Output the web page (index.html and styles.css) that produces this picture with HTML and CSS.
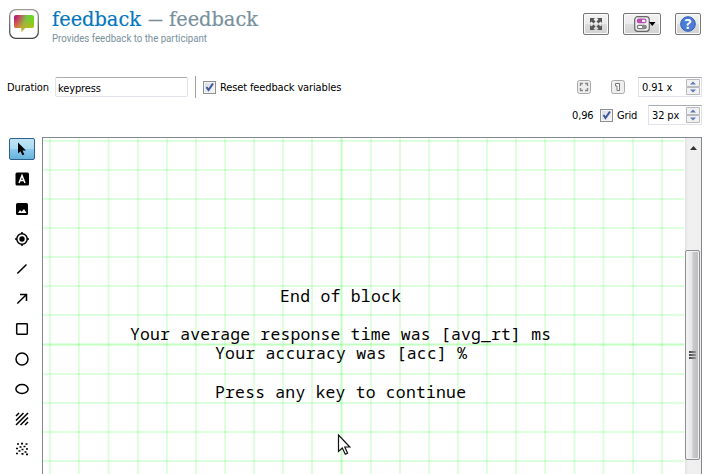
FILE: index.html
```html
<!DOCTYPE html>
<html lang="en">
<head>
<meta charset="utf-8">
<title>feedback</title>
<link rel="stylesheet" href="styles.css">
</head>
<body>
<header class="header">
  <svg class="logo" width="30" height="30" viewBox="0 0 30 30">
    <defs>
      <linearGradient id="hue" x1="0" y1="0" x2="1" y2=".25"><stop offset="0" stop-color="#a3148c"/><stop offset=".28" stop-color="#c64b5d"/><stop offset=".6" stop-color="#7cc04b"/><stop offset="1" stop-color="#66de16"/></linearGradient>
      <linearGradient id="warm" x1="0" y1="0" x2="0" y2="1"><stop offset=".2" stop-color="#f0a020" stop-opacity="0"/><stop offset="1" stop-color="#f0a51c" stop-opacity=".75"/></linearGradient>
      <linearGradient id="rim" x1="0" y1="0" x2="0" y2="1"><stop offset="0" stop-color="#999"/><stop offset="1" stop-color="#444"/></linearGradient>
    </defs>
    <rect x=".7" y=".7" width="28.6" height="28.6" rx="6" fill="#fff" stroke="url(#rim)" stroke-width="1.3"/>
    <path d="M7 6H23Q25 6 25 8V17Q25 19 23 19H16L12.500 23V19H7Q5 19 5 17V8Q5 6 7 6Z" fill="url(#hue)"/>
    <path d="M7 6H23Q25 6 25 8V17Q25 19 23 19H16L12.500 23V19H7Q5 19 5 17V8Q5 6 7 6Z" fill="url(#warm)"/>
  </svg>
  <svg class="titles" width="260" height="52" viewBox="50 0 260 52">
    <text class="title name" x="52" y="26" textLength="89" lengthAdjust="spacingAndGlyphs">feedback</text>
    <text class="title" x="148" y="26" textLength="15" lengthAdjust="spacingAndGlyphs">—</text>
    <text class="title" x="169" y="26" textLength="89" lengthAdjust="spacingAndGlyphs">feedback</text>
    <text class="subtitle" x="52" y="42" textLength="155" lengthAdjust="spacingAndGlyphs">Provides feedback to the participant</text>
  </svg>
  <div class="actions">
    <button class="btn"><svg width="24" height="20" viewBox="0 0 24 20"><g fill="#555"><path d="M6 4h5L9.500 5.500 11.500 7.500 9.500 9.500 7.500 7.500 6 9Z"/><path d="M18 4h-5l1.500 1.500-2 2 2 2 2-2L18 9Z"/><path d="M6 16h5l-1.500-1.500 2-2-2-2-2 2L6 11Z"/><path d="M18 16h-5l1.500-1.500-2-2 2-2 2 2L18 11Z"/></g></svg></button>
    <button class="btn wide"><svg width="36" height="20" viewBox="0 0 36 20"><rect x="10.700" y="2.700" width="14.600" height="14.600" rx="3" fill="#eee" stroke="#666" stroke-width="1.200"/><rect x="13.300" y="5.200" width="8.700" height="3.400" rx="1.700" fill="#fff" stroke="#bd4bb5" stroke-width="1.200"/><path d="M14 5h4v4h-4q-1.500-2 0-4" fill="#bd4bb5"/><rect x="13.300" y="11.300" width="8.700" height="3.400" rx="1.700" fill="#fff" stroke="#777" stroke-width="1.200"/><path d="M18 11h4q1.500 2 0 4h-4z" fill="#888"/><path d="M25 8h6.500l-3.250 4z"/></svg></button>
    <button class="btn"><svg width="24" height="20" viewBox="0 0 24 20"><circle cx="12" cy="10" r="7.300" fill="#4a7dd6" stroke="#2c5db5"/><text class="help" x="12" y="15" text-anchor="middle">?</text></svg></button>
  </div>
</header>
<section class="row options">
  <label class="duration">Duration</label>
  <div class="field">keypress</div>
  <i class="sep"></i>
  <span class="check"><svg width="11" height="11" viewBox="0 0 11 11"><path d="M2.500 5 4.500 8 9 1.500"/></svg></span>
  <label class="reset">Reset feedback variables</label>
  <div class="right">
    <svg class="fit" width="14" height="14" viewBox="0 0 14 14"><rect class="mini" x=".5" y=".5" width="13" height="13" rx="2"/><path d="M3.500 6V3.500H6M8 3.500h2.500V6M3.500 8v2.500H6M8 10.500h2.500V8" fill="none" stroke="#888" stroke-width="1.400"/></svg>
    <svg class="one" width="14" height="14" viewBox="0 0 14 14"><rect class="mini" x=".5" y=".5" width="13" height="13" rx="2"/><path d="M4.500 3.500H8.500V10.500H6V6H4.500Z" fill="#fff" stroke="#777"/></svg>
    <div class="spin zoom"><span>0.91 x</span><svg width="14" height="16" viewBox="0 0 14 16"><path class="step" d="M.5.500h13v7H.5zM.5 8.500h13v7H.5z"/><path d="M7 2.500l3 3H4zM4 10.500h6l-3 3z" fill="#5c78bd"/></svg></div>
  </div>
</section>
<section class="row gridrow">
  <span class="coord">0,96</span>
  <span class="check"><svg width="11" height="11" viewBox="0 0 11 11"><path d="M2.500 5 4.500 8 9 1.500"/></svg></span>
  <label class="gridlabel">Grid</label>
  <div class="spin"><span>32 px</span><svg width="14" height="16" viewBox="0 0 14 16"><path class="step" d="M.5.500h13v7H.5zM.5 8.500h13v7H.5z"/><path d="M7 2.500l3 3H4zM4 10.500h6l-3 3z" fill="#5c78bd"/></svg></div>
</section>
<main class="work">
  <nav class="tools">
    <div class="tool active"><svg width="22" height="20" viewBox="0 0 22 20"><path d="M7 3.500V14.500L9.500 12.200 11.300 16.300 13.300 15.400 11.500 11.500H15Z"/></svg></div>
    <div class="tool"><svg width="22" height="20" viewBox="0 0 22 20"><rect x="4.500" y="3.500" width="13.500" height="13" rx="1.500"/><path d="M8 14 11 6.500 14 14M9 11.500h4" fill="none" stroke="#fff" stroke-width="1.500"/></svg></div>
    <div class="tool"><svg width="22" height="20" viewBox="0 0 22 20"><rect x="5" y="4" width="12" height="12" rx="1.500"/><path d="M7 14 9 11l1.500 1.800L13 10l2.500 4z" fill="#fff"/></svg></div>
    <div class="tool"><svg width="22" height="20" viewBox="0 0 22 20"><circle cx="11" cy="10" r="2.700"/><circle class="line" cx="11" cy="10" r="5.200"/><path class="line" d="M11 3v2M11 15v2M4 10h2M16 10h2"/></svg></div>
    <div class="tool"><svg width="22" height="20" viewBox="0 0 22 20"><path class="line" d="M6.300 14.500 15.500 5.500"/></svg></div>
    <div class="tool"><svg width="22" height="20" viewBox="0 0 22 20"><path class="line" d="M6.300 14.500 15.500 5.500M9 5.500h6.500V12"/></svg></div>
    <div class="tool"><svg width="22" height="20" viewBox="0 0 22 20"><rect class="line" x="5.700" y="4.700" width="10.600" height="10.600" rx=".7"/></svg></div>
    <div class="tool"><svg width="22" height="20" viewBox="0 0 22 20"><circle class="line" cx="11" cy="10" r="6"/></svg></div>
    <div class="tool"><svg width="22" height="20" viewBox="0 0 22 20"><ellipse class="line" cx="11" cy="10" rx="6.100" ry="4.500"/></svg></div>
    <div class="tool"><svg width="22" height="20" viewBox="0 0 22 20"><path class="line" d="M5 7 8 4M5 11.500 12.500 4M5 16 17 4M9.500 16 17 8.500M14 16l3-3"/></svg></div>
    <div class="tool"><svg width="22" height="20" viewBox="0 0 22 20"><path class="dots" d="M6 5h2M10 4.700h2M14.500 5h2M8.500 8h2M12.500 7.500h2M5 9.500h2M10.500 10.500h2M15 10h2M7.500 12h2M13.500 13h2M5 14.500h2M10.500 14.800h2M15 15.300h2"/></svg></div>
  </nav>
  <div class="frame">
    <svg class="canvas" width="642" height="336" viewBox="43 138 642 336">
      <path class="grid" d="M50 138V474M79 138V474M108.500 138V474M138 138V474M167 138V474M196 138V474M225 138V474M254 138V474M283 138V474M312 138V474M341.500 138V474M371 138V474M400 138V474M429 138V474M458 138V474M487 138V474M516 138V474M545 138V474M574.500 138V474M603.500 138V474M633 138V474M662 138V474"/>
      <path class="grid" d="M43 141H684M43 170H684M43 199H684M43 228H684M43 257H684M43 286H684M43 315H684M43 344.500H684M43 374H684M43 403H684M43 432H684M43 461H684"/>
      <path class="grid" d="M341.500 138V474"/><path class="grid" d="M43 344.500H684"/>
      <g class="sketch">
        <text x="280" y="302" textLength="121">End of block</text>
        <text x="130" y="340" textLength="421">Your average response time was [avg_rt] ms</text>
        <text x="215" y="359" textLength="252">Your accuracy was [acc] %</text>
        <text x="215" y="398" textLength="251">Press any key to continue</text>
      </g>
      <path d="M338.500 435V451.500L342.300 448 345.300 454.300 347.600 453.200 344.800 447H349.800Z" fill="#fff" stroke="#111" stroke-width="1.200"/>
    </svg>
    <div class="scroll">
      <svg class="up" width="7" height="4" viewBox="0 0 7 4"><path d="M0 4 3.500 0 7 4z" fill="#333"/></svg>
      <div class="thumb"><i></i><i></i><i></i></div>
    </div>
  </div>
</main>
</body>
</html>
```
FILE: styles.css
```css
* { box-sizing: border-box; }
body { margin: 0; width: 707px; height: 474px; overflow: hidden; background: #fff; color: #000; font: 11px/14px "DejaVu Sans Condensed", "DejaVu Sans", sans-serif; font-stretch: condensed; letter-spacing: -.13px; }
svg { display: block; flex: none; }
.header { display: flex; height: 76px; padding-left: 9px; }
.logo { margin-top: 9px; }
.titles { margin-left: 11px; letter-spacing: 0; }
.title { font: 20.5px "DejaVu Serif", serif; font-stretch: condensed; fill: #78909c; stroke: #78909c; stroke-width: .15; }
.name { fill: #0277bd; stroke: #0277bd; }
.subtitle { font: 11px Roboto, sans-serif; fill: #78909c; }
.actions { display: flex; gap: 14px; margin: 13px 6px 0 auto; }
.btn { width: 26px; height: 22px; padding: 0; border: 1px solid #777; border-radius: 2px; background: linear-gradient(#f2f2f2, #ebebeb 48%, #ddd 50%, #d2d2d2); box-shadow: inset 0 0 0 1px #fafafa; }
.wide { width: 38px; }
.help { font: bold 14px "Open Sans", sans-serif; fill: #fff; }
.row { display: flex; align-items: center; white-space: nowrap; }
.options { height: 22px; padding: 0 5px 0 7px; }
.duration { width: 48px; padding-top: 1px; }
.field { width: 133px; height: 20px; padding: 4px 2px 0; border: 1px solid #e2e3ea; border-top-color: #abadb3; border-radius: 2px; }
.sep { width: 1px; height: 22px; margin: 0 7px; background: #a0a0a0; }
.check { width: 13px; height: 13px; border: 1px solid #8e8f8f; background: linear-gradient(135deg, #d4d8df, #f8f8f8); box-shadow: inset 0 0 0 1px #f4f4f4; }
.check path { fill: none; stroke: #3f55a0; stroke-width: 2; }
.reset { margin-left: 4px; padding-top: 1px; }
.right { display: flex; align-items: center; margin-left: auto; }
.mini { fill: #eee; stroke: #aaa; }
.one { margin: 0 13px 0 20px; }
.spin { display: flex; align-items: center; justify-content: space-between; width: 54px; height: 20px; padding: 2px 1px 0 3px; border: 1px solid #e2e3ea; border-top-color: #abadb3; }
.spin svg { margin-top: -2px; }
.zoom { width: 64px; }
.step { fill: #f1f1f1; stroke: #b8bac0; }
.gridrow { height: 34px; justify-content: flex-end; padding: 0 5px 0 0; }
.coord { width: 28px; padding-top: 1px; }
.gridlabel { width: 31px; margin-left: 4px; padding-top: 1px; }
.work { display: flex; height: 342px; padding-top: 5px; }
.tools { width: 42px; padding: 1px 0 0 9px; }
.tool { display: flex; justify-content: center; width: 26px; height: 22px; margin-bottom: 8px; padding: 1px 0; }
.tool.active { padding: 0; border: 1px solid #2c628b; border-radius: 2px; background: linear-gradient(#c2e4f6, #a9daf2 49%, #8dcaee 51%, #68b3db); }
.line { fill: none; stroke: #000; stroke-width: 1.5; }
.dots { fill: none; stroke: #000; stroke-width: 1.7; }
.frame { display: flex; width: 660px; height: 338px; border: 1px solid #828790; }
.grid { fill: none; stroke: #0f0; stroke-opacity: .13; stroke-width: 2; }
.sketch { font: 16.4px "Droid Sans Mono", "Noto Sans Mono", "DejaVu Sans Mono", monospace; letter-spacing: 0; fill: #000; }
.scroll { width: 16px; height: 336px; background: linear-gradient(90deg, #e3e3e3, #f0f0f0 20%, #efefef); }
.up { margin: 8px 0 0 5px; }
.thumb { display: flex; flex-direction: column; align-items: center; justify-content: center; gap: 1px; width: 15px; height: 210px; margin-top: 100px; border: 1px solid #8f8f8f; border-radius: 2px; background: linear-gradient(90deg, #f5f5f5, #e6e6e8 45%, #c9c9cd 55%, #bdbdc1); box-shadow: inset 0 0 0 1px #f2f2f2; }
.thumb i { width: 7px; height: 2px; background: linear-gradient(90deg, #444, #999); }
```
